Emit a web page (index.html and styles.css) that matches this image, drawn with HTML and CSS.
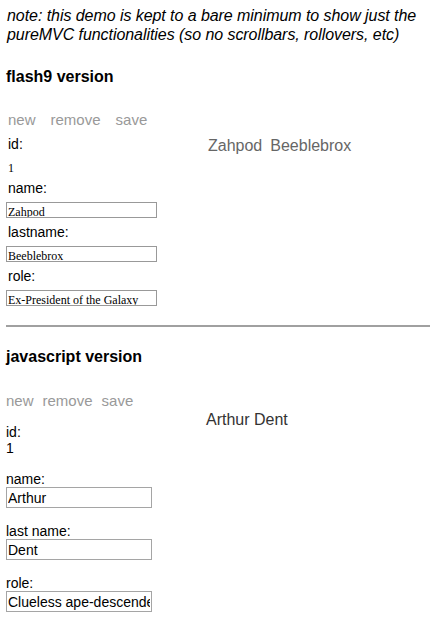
FILE: index.html
```html
<!DOCTYPE html>
<html>
<head>
<meta charset="utf-8">
<title>PureMVC demo</title>
<link rel="stylesheet" href="styles.css">
</head>
<body>
<p class="note">note: this demo is kept to a bare minimum to show just the pureMVC functionalities (so no scrollbars, rollovers, etc)</p>

<h3 class="title">flash9 version</h3>
<section class="flash">
  <div class="actions flash-actions"><span>new</span><span>remove</span><span>save</span></div>
  <div class="flash-body">
    <div class="fields">
      <div class="frow">id:</div>
      <div class="frow fval">1</div>
      <div class="frow">name:</div>
      <div class="frow fbox"><div class="box">Zahpod</div></div>
      <div class="frow">lastname:</div>
      <div class="frow fbox"><div class="box">Beeblebrox</div></div>
      <div class="frow">role:</div>
      <div class="frow fbox"><div class="box">Ex-President of the Galaxy</div></div>
    </div>
    <div class="fullname"><span>Zahpod</span><span>Beeblebrox</span></div>
  </div>
</section>

<hr class="sep">

<h3 class="title js-title">javascript version</h3>
<section class="js">
  <div class="js-left">
    <div class="actions js-actions"><span>new</span><span>remove</span><span>save</span></div>
    <div class="js-id"><div class="lbl">id:</div><div class="lbl">1</div></div>
    <div class="js-field"><div class="lbl">name:</div><input class="inp" type="text" value="Arthur"></div>
    <div class="js-field"><div class="lbl">last name:</div><input class="inp" type="text" value="Dent"></div>
    <div class="js-field"><div class="lbl">role:</div><input class="inp" type="text" value="Clueless ape-descendent"></div>
  </div>
  <div class="js-name">Arthur Dent</div>
</section>
</body>
</html>
```

FILE: styles.css
```css
* { box-sizing: border-box; }

body {
  margin: 0;
  padding: 0 4px 0 6px;
  font-family: "Liberation Sans", Arial, sans-serif;
  color: #000;
  background: #fff;
}

.note {
  margin: 6px 0 0 1px;
  font-style: italic;
  font-size: 16px;
  line-height: 19px;
  letter-spacing: -0.06px;
}

.title {
  margin: 23px 0 0;
  font-size: 16px;
  font-weight: bold;
  line-height: 19px;
}

.actions {
  display: flex;
  font-size: 15px;
  line-height: 19px;
  color: #999;
}

/* flash version */
.flash {
  margin-top: 24px;
  padding-left: 2px;
}

.flash-actions { gap: 15px; }

.flash-body {
  display: flex;
  margin-top: 4px;
}

.fields {
  width: 200px;
  display: flex;
  flex-direction: column;
}

.frow {
  height: 22px;
  line-height: 22px;
  font-size: 14px;
}

.fval {
  font-family: "Liberation Serif", "Times New Roman", serif;
  font-size: 12px;
  padding-top: 2px;
}

.fbox {
  display: flex;
  align-items: center;
}

.box {
  width: 151px;
  height: 16px;
  margin-left: -2px;
  border: 1px solid #999;
  padding: 2px 0 0 1px;
  font-family: "Liberation Serif", "Times New Roman", serif;
  font-size: 12px;
  line-height: 14px;
  overflow: hidden;
  white-space: nowrap;
}

.fullname {
  display: flex;
  gap: 8px;
  padding-top: 2px;
  font-size: 16px;
  line-height: 22px;
  color: #666;
}

.sep {
  margin: 16px 0 0;
  height: 0;
  border: 0;
  border-top: 2px solid #a0a0a0;
}

/* javascript version */
.js-title { margin-top: 20px; }

.js {
  display: flex;
  margin-top: 25px;
}

.js-left {
  width: 200px;
  display: flex;
  flex-direction: column;
}

.js-actions { gap: 9px; }

.lbl {
  font-size: 14px;
  line-height: 16px;
}

.js-id { margin-top: 14px; }

.js-field { margin-top: 15px; }

.inp {
  display: block;
  width: 146px;
  height: 21px;
  margin: 0;
  padding: 0 1px;
  border: 1px solid #a5a5a5;
  font-family: "Liberation Sans", Arial, sans-serif;
  font-size: 14px;
  color: #000;
  background: #fff;
}

.js-name {
  padding-top: 19px;
  font-size: 16px;
  line-height: 19px;
  color: #333;
}
```
